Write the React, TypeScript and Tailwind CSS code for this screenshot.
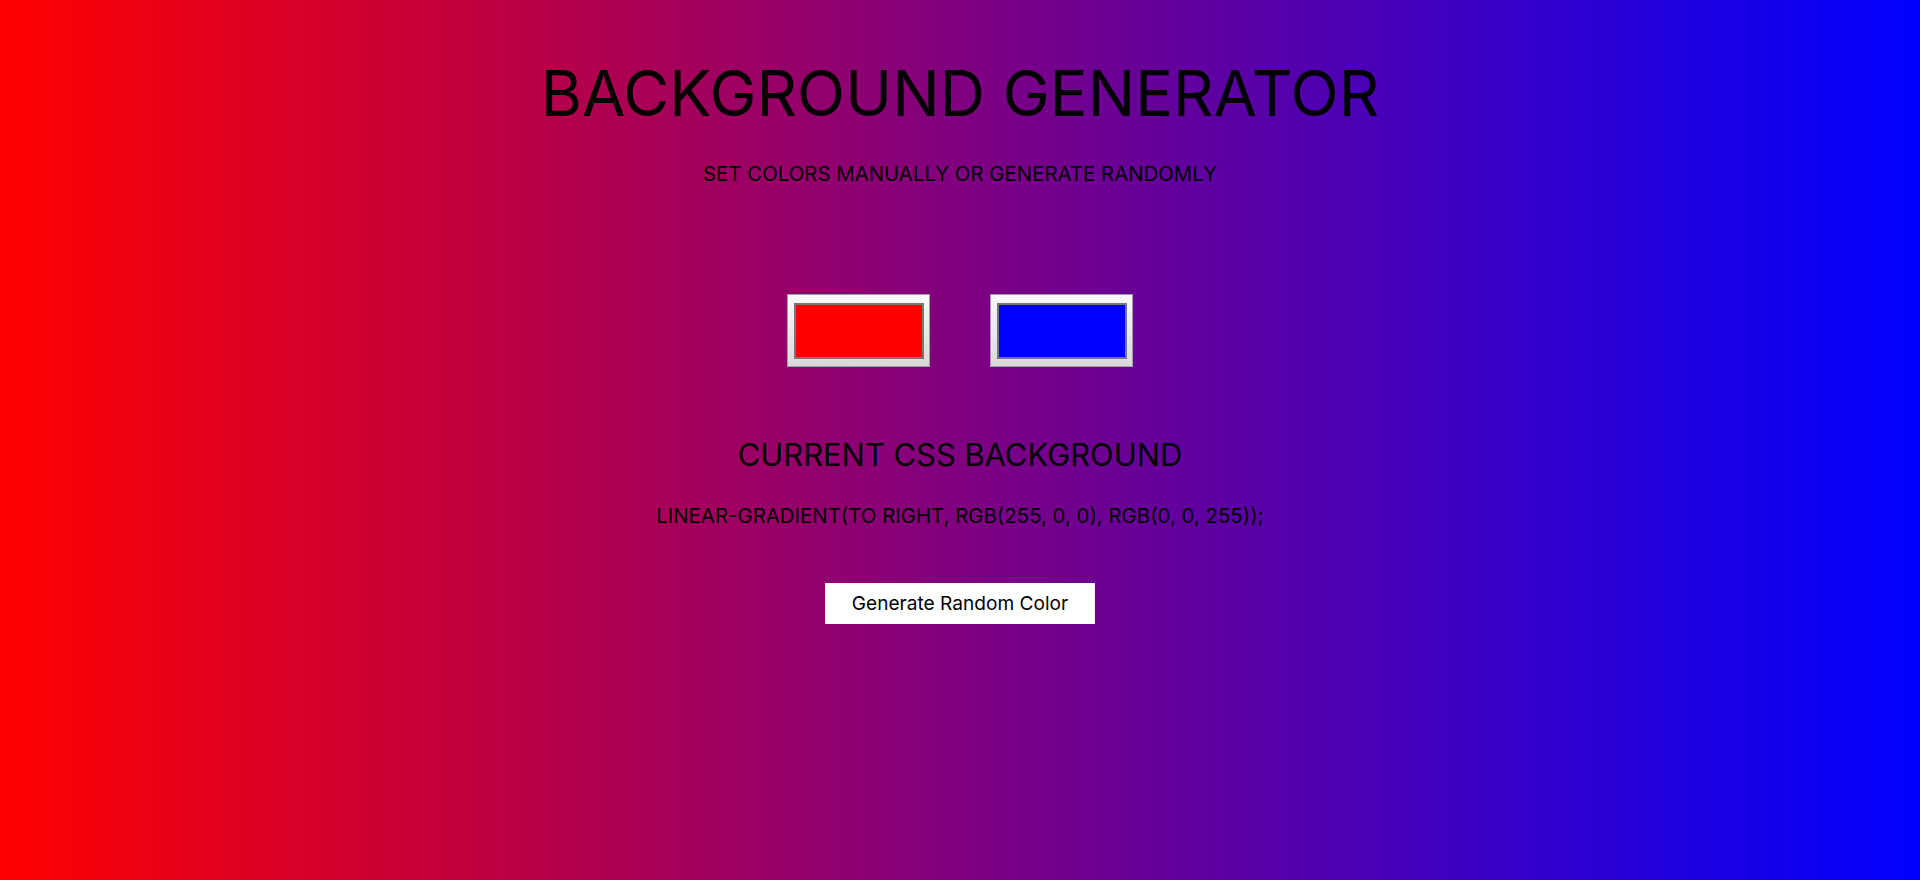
import { useState } from 'react'

const toRgb = (hex: string) => {
  const n = parseInt(hex.slice(1), 16)
  return `rgb(${(n >> 16) & 255}, ${(n >> 8) & 255}, ${n & 255})`
}

const randomHex = () => '#' + Math.floor(Math.random() * 0xffffff).toString(16).padStart(6, '0')

function ColorPicker({ value, onChange }: { value: string; onChange: (v: string) => void }) {
  return (
    <label className="flex h-[73px] w-[143px] cursor-pointer items-center justify-center border border-[#a0a0a0] bg-[linear-gradient(#f9f9f9,#d9d9d9)]">
      <span className="h-[56px] w-[130px] border-2 border-[#777]" style={{ backgroundColor: value }} />
      <input type="color" value={value} onChange={(e) => onChange(e.target.value)} className="sr-only" />
    </label>
  )
}

export default function App() {
  const [c1, setC1] = useState('#ff0000')
  const [c2, setC2] = useState('#0000ff')
  const gradient = `linear-gradient(to right, ${toRgb(c1)}, ${toRgb(c2)})`

  return (
    <div
      className="flex min-h-[880px] w-full flex-col items-center font-['Inter',sans-serif] text-black"
      style={{ background: gradient }}
    >
      <h1 className="mt-[55px] text-[63px] leading-[76px] uppercase">Background Generator</h1>
      <h2 className="mt-[30px] text-[20.4px] leading-[25px] uppercase">Set colors manually or generate randomly</h2>

      <div className="mt-[108px] flex gap-[60px]">
        <ColorPicker value={c1} onChange={setC1} />
        <ColorPicker value={c2} onChange={setC2} />
      </div>

      <h3 className="mt-[69px] text-[30.9px] leading-[38px] uppercase">Current CSS Background</h3>
      <p className="mt-[29px] text-[20.4px] leading-[25px] uppercase">{gradient};</p>

      <button
        onClick={() => {
          setC1(randomHex())
          setC2(randomHex())
        }}
        className="mt-[55px] h-[41px] w-[270px] cursor-pointer bg-white text-[19.1px]"
      >
        Generate Random Color
      </button>
    </div>
  )
}
